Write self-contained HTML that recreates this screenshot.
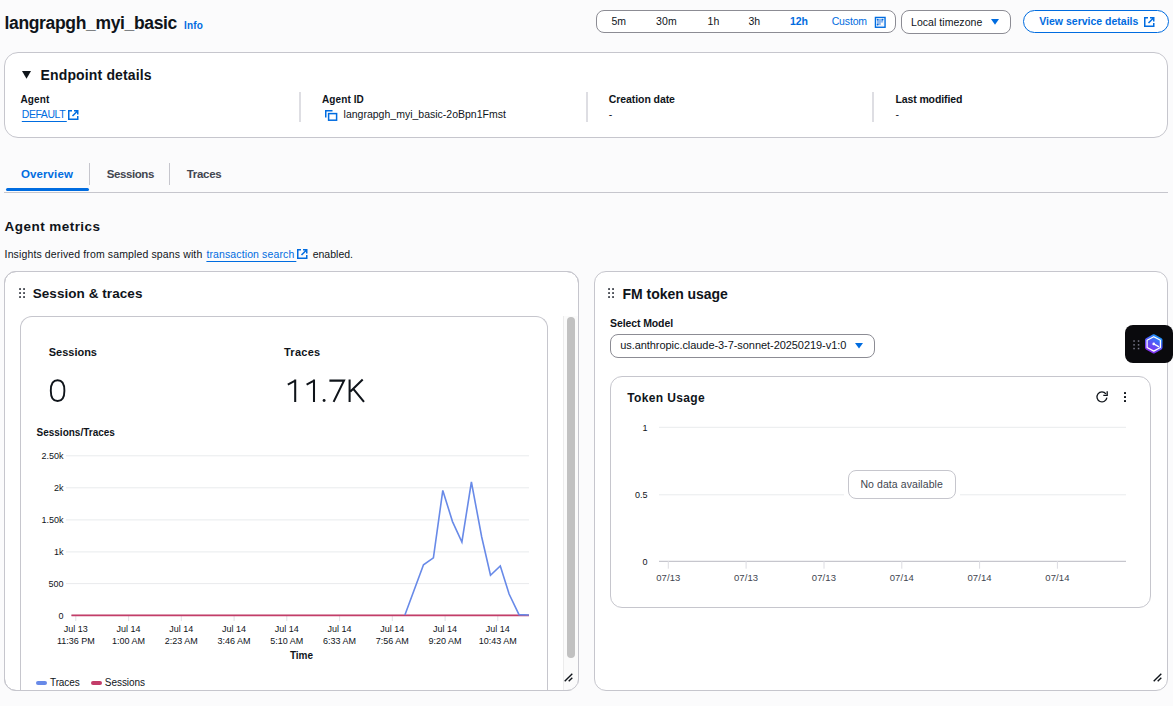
<!DOCTYPE html>
<html><head><meta charset="utf-8">
<style>
html,body{margin:0;padding:0;}
body{width:1173px;height:706px;overflow:hidden;position:relative;background:#fbfbfc;font-family:"Liberation Sans",sans-serif;color:#0f141a;}
.t{position:absolute;white-space:nowrap;}
.b{position:absolute;box-sizing:border-box;}
svg{position:absolute;overflow:visible;}
</style></head><body>
<div class="t " style="left:4.5px;top:14.99px;font-size:17.5px;line-height:17.5px;font-weight:bold;color:#0f141a;letter-spacing:-0.34px;">langrapgh_myi_basic</div>
<div class="t " style="left:184px;top:20.54px;font-size:10px;line-height:10px;font-weight:bold;color:#006ce0;letter-spacing:0.15px;">Info</div>
<div class="b" style="left:596px;top:10px;width:300px;height:23px;border:1px solid #8c8c94;border-radius:8px;background:#fff;"></div>
<div class="t " style="left:611.5px;top:16.31px;font-size:10.5px;line-height:10.5px;color:#0f141a;">5m</div>
<div class="t " style="left:656px;top:16.31px;font-size:10.5px;line-height:10.5px;color:#0f141a;letter-spacing:0.15px;">30m</div>
<div class="t " style="left:707.6px;top:16.31px;font-size:10.5px;line-height:10.5px;color:#0f141a;">1h</div>
<div class="t " style="left:748.5px;top:16.31px;font-size:10.5px;line-height:10.5px;color:#0f141a;">3h</div>
<div class="t " style="left:790px;top:16.31px;font-size:10.5px;line-height:10.5px;font-weight:bold;color:#006ce0;letter-spacing:-0.1px;">12h</div>
<div class="t " style="left:831.7px;top:16.31px;font-size:10.5px;line-height:10.5px;color:#006ce0;letter-spacing:-0.15px;">Custom</div>
<svg style="left:874px;top:16px" width="12" height="12" viewBox="0 0 12 12"><rect x="1.45" y="1.45" width="9.6" height="9.8" fill="none" stroke="#006ce0" stroke-width="1.4"/><rect x="3" y="3" width="6.2" height="6.2" fill="#8fb8ee"/><rect x="6.8" y="6.6" width="2.4" height="2.6" fill="#fff"/><g fill="#006ce0"><circle cx="3.6" cy="3.6" r="0.9"/><circle cx="8.6" cy="3.6" r="0.9"/><circle cx="3.6" cy="8.6" r="0.9"/></g></svg>
<div class="b" style="left:901px;top:10px;width:110px;height:24px;border:1px solid #8c8c94;border-radius:8px;background:#fff;"></div>
<div class="t " style="left:911px;top:17.31px;font-size:10.5px;line-height:10.5px;color:#0f141a;letter-spacing:0.05px;">Local timezone</div>
<svg style="left:991px;top:19px" width="8" height="6" viewBox="0 0 8 6"><path d="M0 0H8L4 5.8Z" fill="#006ce0"/></svg>
<div class="b" style="left:1022.5px;top:9.5px;width:146.0px;height:23.5px;border:1.5px solid #006ce0;border-radius:12px;background:#fff;"></div>
<div class="t " style="left:1039.3px;top:16.11px;font-size:10.5px;line-height:10.5px;font-weight:bold;color:#006ce0;">View service details</div>
<svg style="left:1144px;top:17px" width="11" height="10" viewBox="0 0 11 10"><path d="M4 0.75H0.75V9.25H9.75V6" fill="none" stroke="#006ce0" stroke-width="1.5"/><path d="M6 0.75H9.75V4.5M9.75 0.75L4.5 6" fill="none" stroke="#006ce0" stroke-width="1.5"/></svg>
<div class="b" style="left:4px;top:52px;width:1164px;height:86px;border:1px solid #c6c6cd;border-radius:14px;background:#fff;"></div>
<svg style="left:22px;top:71px" width="9" height="8" viewBox="0 0 9 8"><path d="M0 0H9L4.5 7.8Z" fill="#0f141a"/></svg>
<div class="t " style="left:40.5px;top:67.95px;font-size:14px;line-height:14px;font-weight:bold;color:#0f141a;letter-spacing:0.15px;">Endpoint details</div>
<div class="t " style="left:20.5px;top:94.53px;font-size:10px;line-height:10px;font-weight:bold;color:#0f141a;letter-spacing:0.1px;">Agent</div>
<div class="t " style="left:21.8px;top:109.31px;font-size:10.5px;line-height:10.5px;color:#006ce0;letter-spacing:-0.45px;text-decoration:underline;text-underline-offset:3px;">DEFAULT&#8201;</div>
<svg style="left:68px;top:110px" width="11" height="10" viewBox="0 0 11 10"><path d="M4 0.75H0.75V9.25H9.75V6" fill="none" stroke="#006ce0" stroke-width="1.5"/><path d="M6 0.75H9.75V4.5M9.75 0.75L4.5 6" fill="none" stroke="#006ce0" stroke-width="1.5"/></svg>
<div class="b" style="left:299px;top:92px;width:2px;height:30px;background:#dedee3;"></div>
<div class="b" style="left:586px;top:92px;width:2px;height:30px;background:#dedee3;"></div>
<div class="b" style="left:872px;top:92px;width:2px;height:30px;background:#dedee3;"></div>
<div class="t " style="left:322px;top:94.53px;font-size:10px;line-height:10px;font-weight:bold;color:#0f141a;letter-spacing:0.1px;">Agent ID</div>
<svg style="left:324.5px;top:109.5px" width="13" height="11" viewBox="0 0 13 11"><path d="M0.75 7.5V0.75H7.5" fill="none" stroke="#006ce0" stroke-width="1.5"/><rect x="3.6" y="3.6" width="8" height="6.6" fill="none" stroke="#006ce0" stroke-width="1.5"/></svg>
<div class="t " style="left:343.6px;top:109.31px;font-size:10.5px;line-height:10.5px;color:#0f141a;">langrapgh_myi_basic-2oBpn1Fmst</div>
<div class="t " style="left:608.8px;top:93.91px;font-size:10.5px;line-height:10.5px;font-weight:bold;color:#0f141a;letter-spacing:-0.08px;">Creation date</div>
<div class="t " style="left:608.8px;top:109.11px;font-size:10.5px;line-height:10.5px;color:#0f141a;">-</div>
<div class="t " style="left:895.5px;top:93.91px;font-size:10.5px;line-height:10.5px;font-weight:bold;color:#0f141a;letter-spacing:-0.12px;">Last modified</div>
<div class="t " style="left:895.5px;top:109.11px;font-size:10.5px;line-height:10.5px;color:#0f141a;">-</div>
<div class="t " style="left:21px;top:169.27px;font-size:11.5px;line-height:11.5px;font-weight:bold;color:#006ce0;letter-spacing:0.1px;">Overview</div>
<div class="t " style="left:106.7px;top:169.27px;font-size:11.5px;line-height:11.5px;font-weight:bold;color:#424650;letter-spacing:-0.4px;">Sessions</div>
<div class="t " style="left:186.7px;top:169.27px;font-size:11.5px;line-height:11.5px;font-weight:bold;color:#424650;letter-spacing:-0.3px;">Traces</div>
<div class="b" style="left:89px;top:163px;width:1px;height:21.5px;background:#c6c6cd;"></div>
<div class="b" style="left:169px;top:163px;width:1px;height:21.5px;background:#c6c6cd;"></div>
<div class="b" style="left:6px;top:188px;width:82.5px;height:3px;background:#006ce0;border-radius:2px;"></div>
<div class="b" style="left:4px;top:192px;width:1164px;height:1px;background:#c6c6cd;"></div>
<div class="t " style="left:4.6px;top:220.17px;font-size:13.5px;line-height:13.5px;font-weight:bold;color:#0f141a;letter-spacing:0.45px;">Agent metrics</div>
<div class="t " style="left:4.6px;top:249.11px;font-size:10.5px;line-height:10.5px;color:#0f141a;letter-spacing:0.13px;">Insights derived from sampled spans with</div>
<div class="t " style="left:206.4px;top:249.11px;font-size:10.5px;line-height:10.5px;color:#006ce0;letter-spacing:0.12px;text-decoration:underline;text-underline-offset:3px;">transaction search&#8202;&#8202;</div>
<svg style="left:297px;top:249px" width="11" height="10" viewBox="0 0 11 10"><path d="M4 0.75H0.75V9.25H9.75V6" fill="none" stroke="#006ce0" stroke-width="1.5"/><path d="M6 0.75H9.75V4.5M9.75 0.75L4.5 6" fill="none" stroke="#006ce0" stroke-width="1.5"/></svg>
<div class="t " style="left:312.7px;top:249.11px;font-size:10.5px;line-height:10.5px;color:#0f141a;">enabled.</div>
<div class="b" style="left:4px;top:271px;width:575px;height:420px;border:1px solid #c6c6cd;border-radius:12px;background:#fff;overflow:hidden;"></div>
<svg style="left:19px;top:288px" width="7" height="10" viewBox="0 0 7 10"><g fill="#232831"><rect x="0.2" y="0.2" width="1.7" height="1.7"/><rect x="4.2" y="0.2" width="1.7" height="1.7"/><rect x="0.2" y="4.2" width="1.7" height="1.7"/><rect x="4.2" y="4.2" width="1.7" height="1.7"/><rect x="0.2" y="8.2" width="1.7" height="1.7"/><rect x="4.2" y="8.2" width="1.7" height="1.7"/></g></svg>
<div class="t " style="left:32.7px;top:287.07px;font-size:13.5px;line-height:13.5px;font-weight:bold;color:#0f141a;letter-spacing:0.06px;">Session &amp; traces</div>
<div class="b" style="left:20px;top:316px;width:528px;height:374px;border:1px solid #c6c6cd;border-bottom:none;border-radius:12px 12px 0 0;background:#fff;"></div>
<div class="b" style="left:563px;top:316px;width:15px;height:374px;background:#fbfbfb;border-left:1px solid #ececec;"></div>
<div class="b" style="left:567px;top:316.5px;width:8px;height:341.5px;background:#c1c1c1;border-radius:4px;"></div>
<svg style="left:563.5px;top:672.5px" width="9" height="9" viewBox="0 0 9 9"><path d="M0.7 8.3L8.3 0.7M4.7 8.3L8.3 4.7" stroke="#0f141a" stroke-width="1.4" fill="none"/></svg>
<div class="t " style="left:48.7px;top:346.89px;font-size:11px;line-height:11px;font-weight:bold;color:#0f141a;">Sessions</div>
<div class="t " style="left:284px;top:346.89px;font-size:11px;line-height:11px;font-weight:bold;color:#0f141a;letter-spacing:0.25px;">Traces</div>
<svg style="left:0;top:0" width="1173" height="706" viewBox="0 0 1173 706"><g fill="none" stroke="#0f141a" stroke-width="1.9" stroke-linecap="butt"><path d="M57.6 380.3C52.6 380.3 50.8 384.8 50.8 390.65C50.8 396.5 52.6 401 57.6 401C62.6 401 64.4 396.5 64.4 390.65C64.4 384.8 62.6 380.3 57.6 380.3Z"/></g></svg>
<svg style="left:0;top:0" width="1173" height="706" viewBox="0 0 1173 706"><g fill="none" stroke="#0f141a" stroke-width="2.05" stroke-linejoin="miter"><path d="M287.8 384.6L295.2 380.6M295.2 379.4V401.9"/><path d="M306.6 384.6L314 380.6M314 379.4V401.9"/><path d="M329.4 380.6H344L333.6 401.9"/><path d="M349.6 379.4V401.9M362.7 379.6L350.4 391.6M353.3 388.8L364 401.9"/></g><circle cx="324.1" cy="400.5" r="1.45" fill="#0f141a"/></svg>
<div class="t " style="left:36.5px;top:427.74px;font-size:10px;line-height:10px;font-weight:bold;color:#0f141a;">Sessions/Traces</div>
<svg style="left:0;top:0" width="1173" height="706" viewBox="0 0 1173 706"><line x1="66" y1="455.8" x2="529" y2="455.8" stroke="#e9ebed" stroke-width="1"/><line x1="66" y1="487.8" x2="529" y2="487.8" stroke="#e9ebed" stroke-width="1"/><line x1="66" y1="519.9" x2="529" y2="519.9" stroke="#e9ebed" stroke-width="1"/><line x1="66" y1="551.9" x2="529" y2="551.9" stroke="#e9ebed" stroke-width="1"/><line x1="66" y1="583.6" x2="529" y2="583.6" stroke="#e9ebed" stroke-width="1"/><line x1="75.8" y1="615" x2="75.8" y2="621" stroke="#e0e0e6" stroke-width="1"/><line x1="128.6" y1="615" x2="128.6" y2="621" stroke="#e0e0e6" stroke-width="1"/><line x1="181.3" y1="615" x2="181.3" y2="621" stroke="#e0e0e6" stroke-width="1"/><line x1="234.1" y1="615" x2="234.1" y2="621" stroke="#e0e0e6" stroke-width="1"/><line x1="286.8" y1="615" x2="286.8" y2="621" stroke="#e0e0e6" stroke-width="1"/><line x1="339.6" y1="615" x2="339.6" y2="621" stroke="#e0e0e6" stroke-width="1"/><line x1="392.3" y1="615" x2="392.3" y2="621" stroke="#e0e0e6" stroke-width="1"/><line x1="445.1" y1="615" x2="445.1" y2="621" stroke="#e0e0e6" stroke-width="1"/><line x1="497.8" y1="615" x2="497.8" y2="621" stroke="#e0e0e6" stroke-width="1"/><line x1="71" y1="615.3" x2="529" y2="615.3" stroke="#c6c6cd" stroke-width="1"/><line x1="71.5" y1="615.3" x2="529" y2="615.3" stroke="#c33d69" stroke-width="1.7"/><polyline points="404.9,615 423.5,564.8 433.4,557.8 442.8,490.4 452.5,521.6 461.9,542 471.4,482 481.7,537 490.5,575.3 500.3,565.9 509.1,594 519,614.6 528.9,615" fill="none" stroke="#688ae8" stroke-width="1.6" stroke-linejoin="miter"/></svg>
<div class="t " style="right:1109.5px;top:452.38px;font-size:9px;line-height:9px;color:#0f141a;">2.50k</div>
<div class="t " style="right:1109.5px;top:484.38px;font-size:9px;line-height:9px;color:#0f141a;">2k</div>
<div class="t " style="right:1109.5px;top:516.48px;font-size:9px;line-height:9px;color:#0f141a;">1.50k</div>
<div class="t " style="right:1109.5px;top:548.48px;font-size:9px;line-height:9px;color:#0f141a;">1k</div>
<div class="t " style="right:1109.5px;top:580.18px;font-size:9px;line-height:9px;color:#0f141a;">500</div>
<div class="t " style="right:1109.5px;top:612.18px;font-size:9px;line-height:9px;color:#0f141a;">0</div>
<div class="t " style="left:-24.200000000000003px;width:200px;text-align:center;top:624.98px;font-size:9px;line-height:9px;color:#0f141a;">Jul 13</div>
<div class="t " style="left:-24.200000000000003px;width:200px;text-align:center;top:637.08px;font-size:9px;line-height:9px;color:#0f141a;">11:36 PM</div>
<div class="t " style="left:28.55000000000001px;width:200px;text-align:center;top:624.98px;font-size:9px;line-height:9px;color:#0f141a;">Jul 14</div>
<div class="t " style="left:28.55000000000001px;width:200px;text-align:center;top:637.08px;font-size:9px;line-height:9px;color:#0f141a;">1:00 AM</div>
<div class="t " style="left:81.30000000000001px;width:200px;text-align:center;top:624.98px;font-size:9px;line-height:9px;color:#0f141a;">Jul 14</div>
<div class="t " style="left:81.30000000000001px;width:200px;text-align:center;top:637.08px;font-size:9px;line-height:9px;color:#0f141a;">2:23 AM</div>
<div class="t " style="left:134.05px;width:200px;text-align:center;top:624.98px;font-size:9px;line-height:9px;color:#0f141a;">Jul 14</div>
<div class="t " style="left:134.05px;width:200px;text-align:center;top:637.08px;font-size:9px;line-height:9px;color:#0f141a;">3:46 AM</div>
<div class="t " style="left:186.8px;width:200px;text-align:center;top:624.98px;font-size:9px;line-height:9px;color:#0f141a;">Jul 14</div>
<div class="t " style="left:186.8px;width:200px;text-align:center;top:637.08px;font-size:9px;line-height:9px;color:#0f141a;">5:10 AM</div>
<div class="t " style="left:239.55px;width:200px;text-align:center;top:624.98px;font-size:9px;line-height:9px;color:#0f141a;">Jul 14</div>
<div class="t " style="left:239.55px;width:200px;text-align:center;top:637.08px;font-size:9px;line-height:9px;color:#0f141a;">6:33 AM</div>
<div class="t " style="left:292.3px;width:200px;text-align:center;top:624.98px;font-size:9px;line-height:9px;color:#0f141a;">Jul 14</div>
<div class="t " style="left:292.3px;width:200px;text-align:center;top:637.08px;font-size:9px;line-height:9px;color:#0f141a;">7:56 AM</div>
<div class="t " style="left:345.05px;width:200px;text-align:center;top:624.98px;font-size:9px;line-height:9px;color:#0f141a;">Jul 14</div>
<div class="t " style="left:345.05px;width:200px;text-align:center;top:637.08px;font-size:9px;line-height:9px;color:#0f141a;">9:20 AM</div>
<div class="t " style="left:397.8px;width:200px;text-align:center;top:624.98px;font-size:9px;line-height:9px;color:#0f141a;">Jul 14</div>
<div class="t " style="left:397.8px;width:200px;text-align:center;top:637.08px;font-size:9px;line-height:9px;color:#0f141a;">10:43 AM</div>
<div class="t " style="left:201.5px;width:200px;text-align:center;top:650.83px;font-size:10px;line-height:10px;font-weight:bold;color:#0f141a;">Time</div>
<div class="b" style="left:35.5px;top:681.2px;width:11.0px;height:3.3999999999999773px;background:#688ae8;border-radius:2px;"></div>
<div class="t " style="left:50px;top:678.13px;font-size:10px;line-height:10px;color:#0f141a;letter-spacing:-0.1px;">Traces</div>
<div class="b" style="left:90.5px;top:681.2px;width:11.0px;height:3.3999999999999773px;background:#c33d69;border-radius:2px;"></div>
<div class="t " style="left:104.8px;top:678.13px;font-size:10px;line-height:10px;color:#0f141a;letter-spacing:-0.05px;">Sessions</div>
<div class="b" style="left:4px;top:271px;width:575px;height:420px;border:1px solid #c6c6cd;border-radius:12px;"></div>
<div class="b" style="left:594px;top:271px;width:574px;height:420px;border:1px solid #c6c6cd;border-radius:12px;background:#fff;"></div>
<svg style="left:608.4px;top:288px" width="7" height="10" viewBox="0 0 7 10"><g fill="#232831"><rect x="0.2" y="0.2" width="1.7" height="1.7"/><rect x="4.2" y="0.2" width="1.7" height="1.7"/><rect x="0.2" y="4.2" width="1.7" height="1.7"/><rect x="4.2" y="4.2" width="1.7" height="1.7"/><rect x="0.2" y="8.2" width="1.7" height="1.7"/><rect x="4.2" y="8.2" width="1.7" height="1.7"/></g></svg>
<div class="t " style="left:622.5px;top:287.35px;font-size:14px;line-height:14px;font-weight:bold;color:#0f141a;letter-spacing:-0.03px;">FM token usage</div>
<div class="t " style="left:610px;top:318.31px;font-size:10.5px;line-height:10.5px;font-weight:bold;color:#0f141a;letter-spacing:-0.1px;">Select Model</div>
<div class="b" style="left:610px;top:334px;width:265px;height:24px;border:1px solid #8c8c94;border-radius:8px;background:#fff;"></div>
<div class="t " style="left:620.2px;top:340.29px;font-size:11px;line-height:11px;color:#0f141a;letter-spacing:-0.06px;">us.anthropic.claude-3-7-sonnet-20250219-v1:0</div>
<svg style="left:855px;top:343px" width="8" height="6" viewBox="0 0 8 6"><path d="M0 0H8L4 5.5Z" fill="#006ce0"/></svg>
<div class="b" style="left:610px;top:376px;width:541px;height:232px;border:1px solid #c6c6cd;border-radius:12px;background:#fff;"></div>
<div class="t " style="left:627.3px;top:392.04px;font-size:12px;line-height:12px;font-weight:bold;color:#0f141a;letter-spacing:0.35px;">Token Usage</div>
<svg style="left:1096px;top:391px" width="12" height="12" viewBox="0 0 12 12"><path d="M10.9 6.6A5 5 0 1 1 9.9 2.8" fill="none" stroke="#0f141a" stroke-width="1.3"/><path d="M11.2 0.3V4.4H7.3" fill="none" stroke="#0f141a" stroke-width="1.3"/></svg>
<div class="b" style="left:1124px;top:391.8px;width:2px;height:2.0px;background:#0f141a;border-radius:0.5px;"></div>
<div class="b" style="left:1124px;top:396px;width:2px;height:2px;background:#0f141a;border-radius:0.5px;"></div>
<div class="b" style="left:1124px;top:400.2px;width:2px;height:2.0px;background:#0f141a;border-radius:0.5px;"></div>
<svg style="left:0;top:0" width="1173" height="706" viewBox="0 0 1173 706"><line x1="659" y1="427.3" x2="1126" y2="427.3" stroke="#e9ebed" stroke-width="1"/><line x1="659" y1="494.8" x2="1126" y2="494.8" stroke="#e9ebed" stroke-width="1"/><line x1="659" y1="561.4" x2="1126" y2="561.4" stroke="#c6c6cd" stroke-width="1.2"/><line x1="668.3" y1="561" x2="668.3" y2="568.7" stroke="#dcdce2" stroke-width="1"/><line x1="746.1" y1="561" x2="746.1" y2="568.7" stroke="#dcdce2" stroke-width="1"/><line x1="824.0" y1="561" x2="824.0" y2="568.7" stroke="#dcdce2" stroke-width="1"/><line x1="901.8" y1="561" x2="901.8" y2="568.7" stroke="#dcdce2" stroke-width="1"/><line x1="979.6" y1="561" x2="979.6" y2="568.7" stroke="#dcdce2" stroke-width="1"/><line x1="1057.4" y1="561" x2="1057.4" y2="568.7" stroke="#dcdce2" stroke-width="1"/></svg>
<div class="t " style="right:525.6px;top:423.98px;font-size:9px;line-height:9px;color:#0f141a;">1</div>
<div class="t " style="right:525.6px;top:490.58px;font-size:9px;line-height:9px;color:#0f141a;">0.5</div>
<div class="t " style="right:525.6px;top:557.78px;font-size:9px;line-height:9px;color:#0f141a;">0</div>
<div class="t " style="left:568.3px;width:200px;text-align:center;top:573.36px;font-size:9.5px;line-height:9.5px;color:#424650;letter-spacing:0.1px;">07/13</div>
<div class="t " style="left:646.13px;width:200px;text-align:center;top:573.36px;font-size:9.5px;line-height:9.5px;color:#424650;letter-spacing:0.1px;">07/13</div>
<div class="t " style="left:723.9599999999999px;width:200px;text-align:center;top:573.36px;font-size:9.5px;line-height:9.5px;color:#424650;letter-spacing:0.1px;">07/13</div>
<div class="t " style="left:801.79px;width:200px;text-align:center;top:573.36px;font-size:9.5px;line-height:9.5px;color:#424650;letter-spacing:0.1px;">07/14</div>
<div class="t " style="left:879.6199999999999px;width:200px;text-align:center;top:573.36px;font-size:9.5px;line-height:9.5px;color:#424650;letter-spacing:0.1px;">07/14</div>
<div class="t " style="left:957.4499999999998px;width:200px;text-align:center;top:573.36px;font-size:9.5px;line-height:9.5px;color:#424650;letter-spacing:0.1px;">07/14</div>
<div class="b" style="left:844px;top:468px;width:116px;height:33px;background:#fff;"></div>
<div class="b" style="left:848px;top:470px;width:108px;height:29px;border:1px solid #c6c6cd;border-radius:8px;background:#fff;"></div>
<div class="t " style="left:860.4px;top:478.71px;font-size:10.5px;line-height:10.5px;color:#424650;letter-spacing:0.08px;">No data available</div>
<svg style="left:1152.7px;top:672.7px" width="9" height="9" viewBox="0 0 9 9"><path d="M0.7 8.3L8.3 0.7M4.7 8.3L8.3 4.7" stroke="#0f141a" stroke-width="1.4" fill="none"/></svg>
<div class="b" style="left:1125px;top:325px;width:48px;height:38px;background:#0a0a0d;border-radius:8px;"></div>
<svg style="left:1133px;top:339.5px" width="7" height="10" viewBox="0 0 7 10"><g fill="#7a7a8c"><rect x="0.3" y="0.3" width="1.5" height="1.5"/><rect x="4.8" y="0.3" width="1.5" height="1.5"/><rect x="0.3" y="4.1" width="1.5" height="1.5"/><rect x="4.8" y="4.1" width="1.5" height="1.5"/><rect x="0.3" y="7.8" width="1.5" height="1.5"/><rect x="4.8" y="7.8" width="1.5" height="1.5"/></g></svg>
<svg style="left:1144.5px;top:334px" width="18" height="20" viewBox="0 0 18 20"><defs><linearGradient id="hg" x1="0.85" y1="0.05" x2="0.35" y2="1"><stop offset="0" stop-color="#12a4ff"/><stop offset="0.45" stop-color="#4f5af6"/><stop offset="1" stop-color="#8b2cf0"/></linearGradient></defs><path d="M7.7 0.45Q8.75 -0.15 9.8 0.45L16.5 4.3Q17.5 4.9 17.5 6.1V13.6Q17.5 14.8 16.5 15.4L9.8 19.2Q8.75 19.8 7.7 19.2L1 15.4Q0 14.8 0 13.6V6.1Q0 4.9 1 4.3Z" fill="url(#hg)"/><path d="M8.75 2.7L15.4 6.3V13.5L8.75 17.1L2.1 13.5V6.3Z" fill="none" stroke="#fff" stroke-width="1.2" stroke-linejoin="round"/><circle cx="8.7" cy="9.9" r="1.3" fill="#fff"/><path d="M8.7 9.9L13.6 12.6" stroke="#fff" stroke-width="1.2" stroke-linecap="round"/></svg>

</body></html>
